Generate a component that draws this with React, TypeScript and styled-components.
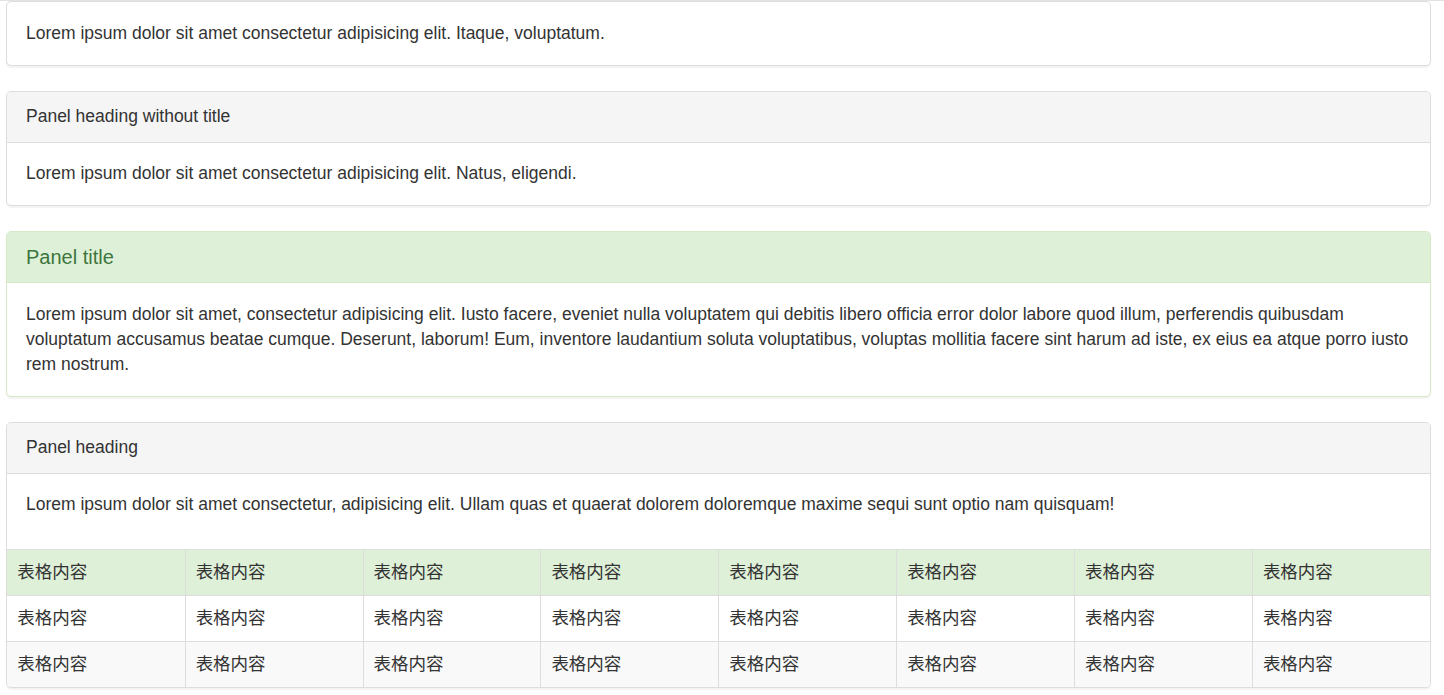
import React from "react";
import styled, { createGlobalStyle, css } from "styled-components";

const GlobalStyle = createGlobalStyle`
  * { box-sizing: border-box; }
  html, body { margin: 0; padding: 0; background: #fff; }
  body {
    font-family: "Liberation Sans", Arial, "Noto Sans CJK SC", sans-serif;
    font-size: 17.5px;
    line-height: 25px;
    color: #333;
  }
`;

const TopRule = styled.div`
  height: 1px;
  background: #e2e2e2;
`;

const Page = styled.div`
  padding: 0 12.75px 0 6.25px;
`;

type Variant = "default" | "success";

const Panel = styled.div<{ $variant?: Variant }>`
  margin-bottom: 25px;
  background: #fff;
  border: 1.25px solid ${(p) => (p.$variant === "success" ? "#d6e9c6" : "#ddd")};
  border-radius: 5px;
  box-shadow: 0 1.25px 1.25px rgba(0, 0, 0, 0.05);
  overflow: hidden;
`;

const Heading = styled.div<{ $variant?: Variant }>`
  padding: 12.5px 18.75px;
  border-bottom: 1.25px solid transparent;
  ${(p) =>
    p.$variant === "success"
      ? css`
          background: #dff0d8;
          color: #3c763d;
          border-color: #d6e9c6;
        `
      : css`
          background: #f5f5f5;
          color: #333;
          border-color: #ddd;
        `}
`;

const Title = styled.h3`
  margin: 0;
  font-size: 20px;
  font-weight: 500;
  line-height: 25px;
  color: inherit;
`;

const Body = styled.div<{ $flush?: boolean }>`
  padding: 18.75px;
  ${(p) => p.$flush && css`padding-bottom: 0;`}
`;

const Para = styled.p`
  margin: 0 0 31.25px;
`;

const Table = styled.table`
  width: 100%;
  border-collapse: collapse;
  table-layout: fixed;
`;

const Row = styled.tr<{ $tone?: "success" | "striped" | "plain" }>`
  background: ${(p) =>
    p.$tone === "success" ? "#dff0d8" : p.$tone === "striped" ? "#f9f9f9" : "#fff"};
`;

const Cell = styled.td`
  padding: 10px;
  line-height: 25px;
  vertical-align: top;
  font-family: "Liberation Sans", "Noto Sans CJK SC", sans-serif;
  border-top: 1.25px solid #ddd;
  border-left: 1.25px solid #ddd;
  &:first-child { border-left: 0; }
`;

const cols = Array.from({ length: 8 });
const tones: Array<"success" | "plain" | "striped"> = ["success", "plain", "striped"];

export default function App() {
  return (
    <>
      <GlobalStyle />
      <TopRule />
      <Page>
        <Panel>
          <Body>Lorem ipsum dolor sit amet consectetur adipisicing elit. Itaque, voluptatum.</Body>
        </Panel>

        <Panel>
          <Heading>Panel heading without title</Heading>
          <Body>Lorem ipsum dolor sit amet consectetur adipisicing elit. Natus, eligendi.</Body>
        </Panel>

        <Panel $variant="success">
          <Heading $variant="success">
            <Title>Panel title</Title>
          </Heading>
          <Body>
            Lorem ipsum dolor sit amet, consectetur adipisicing elit. Iusto facere, eveniet nulla
            voluptatem qui debitis libero officia error dolor labore quod illum, perferendis quibusdam
            voluptatum accusamus beatae cumque. Deserunt, laborum! Eum, inventore laudantium soluta
            voluptatibus, voluptas mollitia facere sint harum ad iste, ex eius ea atque porro iusto rem
            nostrum.
          </Body>
        </Panel>

        <Panel>
          <Heading>Panel heading</Heading>
          <Body $flush>
            <Para>
              Lorem ipsum dolor sit amet consectetur, adipisicing elit. Ullam quas et quaerat dolorem
              doloremque maxime sequi sunt optio nam quisquam!
            </Para>
          </Body>
          <Table>
            <tbody>
              {tones.map((t, r) => (
                <Row key={r} $tone={t}>
                  {cols.map((_, c) => (
                    <Cell key={c}>表格内容</Cell>
                  ))}
                </Row>
              ))}
            </tbody>
          </Table>
        </Panel>
      </Page>
    </>
  );
}
